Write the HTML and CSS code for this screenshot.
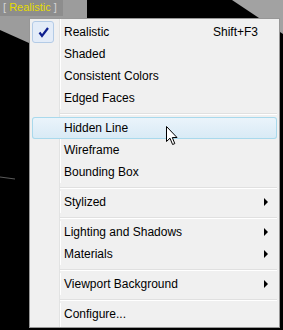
FILE: index.html
```html
<!DOCTYPE html>
<html lang="en">
<head>
  <meta charset="UTF-8" />
  <title>Viewport Visual Styles</title>
  <link rel="stylesheet" href="styles.css">
</head>
<body>
  <div class="scene">
    <svg class="backdrop" width="283" height="330" viewBox="0 0 283 330">
      <rect width="283" height="330" fill="#000" />
      <polygon points="0,0 87,0 87,20 29,43 0,30" fill="#9c9c9c" />
      <rect x="0" y="0" width="63" height="16" fill="#8d8d8d" />
      <polygon points="232,0 283,0 283,34" fill="#a2a2a2" />
      <line x1="0" y1="177" x2="15" y2="179" stroke="#5a5a5a" stroke-width="1" />
    </svg>

    <div class="vp-label">[ <span class="vp-name">Realistic</span> ]</div>

    <div class="menu">
      <div class="item">
        <span class="icon on">
          <svg width="20" height="20" viewBox="0 0 20 20">
            <path d="M6.5 10.5 L9 14 L15 6" fill="none" stroke="#0d1f8f" stroke-width="2.2" />
          </svg>
        </span>
        <span class="label">Realistic</span>
        <span class="key">Shift+F3</span>
      </div>
      <div class="item"><span class="icon"></span><span class="label">Shaded</span></div>
      <div class="item"><span class="icon"></span><span class="label">Consistent Colors</span></div>
      <div class="item"><span class="icon"></span><span class="label">Edged Faces</span></div>
      <div class="sep"></div>
      <div class="item hot"><span class="icon"></span><span class="label">Hidden Line</span></div>
      <div class="item"><span class="icon"></span><span class="label">Wireframe</span></div>
      <div class="item"><span class="icon"></span><span class="label">Bounding Box</span></div>
      <div class="sep"></div>
      <div class="item"><span class="icon"></span><span class="label">Stylized</span><span class="arrow"></span></div>
      <div class="sep"></div>
      <div class="item"><span class="icon"></span><span class="label">Lighting and Shadows</span><span class="arrow"></span></div>
      <div class="item"><span class="icon"></span><span class="label">Materials</span><span class="arrow"></span></div>
      <div class="sep"></div>
      <div class="item"><span class="icon"></span><span class="label">Viewport Background</span><span class="arrow"></span></div>
      <div class="sep"></div>
      <div class="item"><span class="icon"></span><span class="label">Configure...</span></div>
    </div>

    <svg class="pointer" width="13" height="20" viewBox="0 0 13 20">
      <path d="M0.5 0.5 L0.5 15.5 L4 12.2 L6.6 18.5 L8.8 17.6 L6.3 11.5 L11 11.5 Z" fill="#fff" stroke="#000" stroke-width="1" stroke-linejoin="miter" />
    </svg>
  </div>
</body>
</html>
```

FILE: styles.css
```css
body {
  margin: 0;
  background: #000;
  font-family: "Liberation Sans", Arial, sans-serif;
  font-size: 12px;
  color: #000;
  overflow: hidden;
}

.scene {
  position: relative;
  width: 283px;
  height: 330px;
  overflow: hidden;
}

.backdrop {
  position: absolute;
  left: 0;
  top: 0;
  display: block;
}

.vp-label {
  position: absolute;
  left: 3px;
  top: 0;
  line-height: 15px;
  font-size: 11px;
  color: #d4d4d4;
  white-space: pre;
}

.vp-name {
  color: #e6dc00;
}

/* popup menu */
.menu {
  position: absolute;
  left: 29px;
  top: 18px;
  width: 251px;
  box-sizing: border-box;
  border: 1px solid #979797;
  padding: 2px;
  background: linear-gradient(to right, #f0f0f0 29px, #e2e3e3 29px, #e2e3e3 30px, #fff 30px, #fff 31px, #f0f0f0 31px);
}

.item {
  display: flex;
  align-items: center;
  height: 22px;
  line-height: 22px;
  padding-right: 9px;
  border-radius: 3px;
  white-space: nowrap;
}

.item.hot {
  background: linear-gradient(#ebf4fb, #d8eaf5);
  box-shadow: inset 0 0 0 1px #a9d9ec;
}

.icon {
  width: 22px;
  height: 22px;
  margin-right: 10px;
  box-sizing: border-box;
  flex: none;
}

.icon.on {
  border: 1px solid #b3cbe6;
  border-radius: 3px;
  background: #e3ecf8;
}

.icon svg {
  display: block;
}

.label {
  flex: 1;
}

.key {
  margin-right: 10px;
}

.arrow {
  width: 0;
  height: 0;
  border-left: 4px solid #000;
  border-top: 4px solid transparent;
  border-bottom: 4px solid transparent;
}

.sep {
  height: 8px;
  margin-left: 28px;
  background: linear-gradient(#f0f0f0 4px, #e0e0e0 4px, #e0e0e0 5px, #fff 5px, #fff 6px, #f0f0f0 6px);
}

.pointer {
  position: absolute;
  left: 166px;
  top: 126px;
}
```
